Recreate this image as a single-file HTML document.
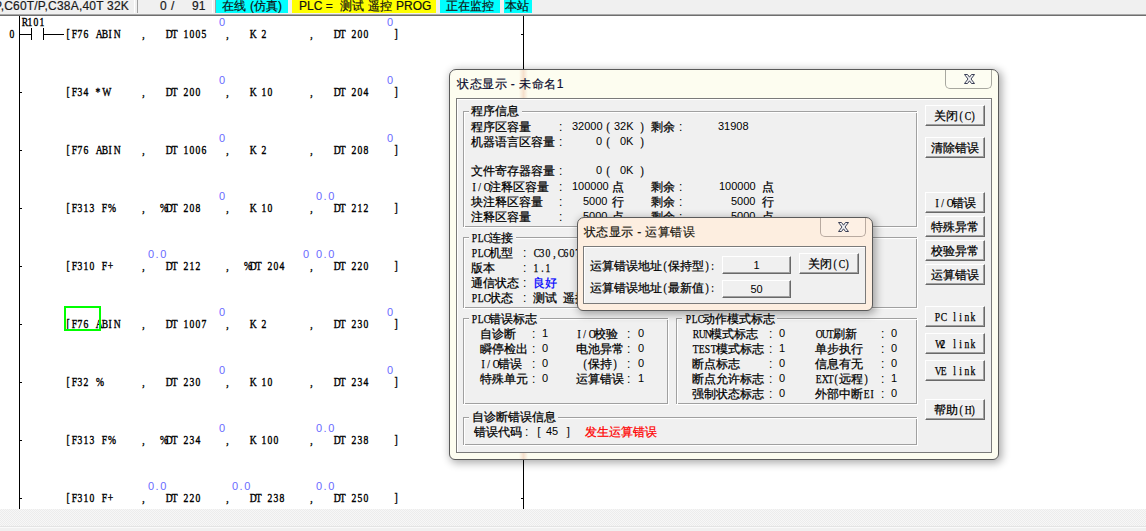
<!DOCTYPE html><html><head><meta charset='utf-8'><style>
*{margin:0;padding:0;box-sizing:border-box}
html,body{width:1146px;height:531px;overflow:hidden;background:#fff;position:relative}
div{position:absolute;white-space:pre}
.m{font-family:'Liberation Serif',serif;font-size:12px;line-height:12px;color:#000;-webkit-text-stroke:0.4px #000}
.q{display:inline-block;width:6px;text-align:center;font-family:'Liberation Serif',serif}
.q>span{display:inline-block;transform:scaleX(0.8)}
.b{font-family:'Liberation Sans',sans-serif;font-size:11px;line-height:12px;letter-spacing:1.5px;color:#6a6aff}
.s{font-family:'Liberation Sans',sans-serif;font-size:12px;line-height:12px;color:#000}
.c{font-family:'Liberation Sans',sans-serif;font-size:12px;line-height:12px;color:#000;-webkit-text-stroke:0.25px currentColor}
.t{font-family:'Liberation Sans',sans-serif;font-size:12px;line-height:12px;color:#101010;-webkit-text-stroke:0.2px currentColor}
.a{font-family:'Liberation Mono',monospace;letter-spacing:-1.2px}
.d{font-family:'Liberation Sans',sans-serif;font-size:11px;line-height:12px;color:#000}
</style></head><body><div style="position:absolute;left:0px;top:0px;width:1146px;height:14px;background:#f0f0f0"></div>
<div style="position:absolute;left:0px;top:14px;width:1146px;height:1px;background:#a8a8a8"></div>
<div style="position:absolute;left:0px;top:15px;width:1146px;height:1px;background:#6e6e6e"></div>
<div class="s" style="left:-6px;top:0px;width:134px;text-align:right;left:-6px;color:#1a1a1a;-webkit-text-stroke:0.2px #1a1a1a;letter-spacing:0.2px">P,C60T/P,C38A,40T 32K</div>
<div style="position:absolute;left:134px;top:0px;width:1px;height:13px;background:#fff"></div>
<div style="position:absolute;left:137px;top:0px;width:1px;height:13px;background:#a0a0a0"></div>
<div class="s" style="left:160px;top:0px;color:#1a1a1a;-webkit-text-stroke:0.2px #1a1a1a">0</div>
<div class="s" style="left:171px;top:0px;color:#1a1a1a;-webkit-text-stroke:0.2px #1a1a1a">/</div>
<div class="s" style="left:192px;top:0px;color:#1a1a1a;-webkit-text-stroke:0.2px #1a1a1a">91</div>
<div style="position:absolute;left:212px;top:0px;width:1px;height:13px;background:#fff"></div>
<div style="position:absolute;left:215px;top:0px;width:1px;height:13px;background:#a0a0a0"></div>
<div style="position:absolute;left:216px;top:0px;width:72px;height:13px;background:#00ffff"></div>
<div class="t" style="left:222px;top:0px;">在线</div>
<div class="t" style="left:250px;top:0px;">(仿真)</div>
<div style="position:absolute;left:292px;top:0px;width:144px;height:13px;background:#ffff00"></div>
<div class="t" style="left:299px;top:0px;">PLC =</div>
<div class="t" style="left:340px;top:0px;">测试</div>
<div class="t" style="left:368px;top:0px;">遥控</div>
<div class="t" style="left:396px;top:0px;">PROG</div>
<div style="position:absolute;left:440px;top:0px;width:60px;height:13px;background:#00ffff"></div>
<div class="t" style="left:446px;top:0px;">正在监控</div>
<div style="position:absolute;left:504px;top:0px;width:28px;height:13px;background:#00ffff"></div>
<div class="t" style="left:505px;top:0px;">本站</div>
<div style="position:absolute;left:0px;top:509px;width:1146px;height:17px;background-color:#f7f7f7;background-image:linear-gradient(45deg,#ececec 25%,transparent 25%,transparent 75%,#ececec 75%),linear-gradient(45deg,#ececec 25%,transparent 25%,transparent 75%,#ececec 75%);background-size:2px 2px;background-position:0 0,1px 1px"></div>
<div style="position:absolute;left:0px;top:526px;width:1146px;height:1px;background:#e4e4e4"></div>
<div style="position:absolute;left:0px;top:527px;width:1146px;height:1px;background:#fafafa"></div>
<div style="position:absolute;left:0px;top:528px;width:1146px;height:3px;background:#f0f0f0"></div>
<div style="position:absolute;left:19px;top:16px;width:1px;height:493px;background:#000"></div>
<div style="position:absolute;left:523px;top:16px;width:1px;height:493px;background:#000"></div>
<div style="position:absolute;left:20px;top:34px;width:2px;height:1px;background:#000"></div>
<div style="position:absolute;left:521px;top:34px;width:2px;height:1px;background:#000"></div>
<div style="position:absolute;left:20px;top:92px;width:2px;height:1px;background:#000"></div>
<div style="position:absolute;left:521px;top:92px;width:2px;height:1px;background:#000"></div>
<div style="position:absolute;left:20px;top:150px;width:2px;height:1px;background:#000"></div>
<div style="position:absolute;left:521px;top:150px;width:2px;height:1px;background:#000"></div>
<div style="position:absolute;left:20px;top:208px;width:2px;height:1px;background:#000"></div>
<div style="position:absolute;left:521px;top:208px;width:2px;height:1px;background:#000"></div>
<div style="position:absolute;left:20px;top:266px;width:2px;height:1px;background:#000"></div>
<div style="position:absolute;left:521px;top:266px;width:2px;height:1px;background:#000"></div>
<div style="position:absolute;left:20px;top:324px;width:2px;height:1px;background:#000"></div>
<div style="position:absolute;left:521px;top:324px;width:2px;height:1px;background:#000"></div>
<div style="position:absolute;left:20px;top:382px;width:2px;height:1px;background:#000"></div>
<div style="position:absolute;left:521px;top:382px;width:2px;height:1px;background:#000"></div>
<div style="position:absolute;left:20px;top:440px;width:2px;height:1px;background:#000"></div>
<div style="position:absolute;left:521px;top:440px;width:2px;height:1px;background:#000"></div>
<div style="position:absolute;left:20px;top:498px;width:2px;height:1px;background:#000"></div>
<div style="position:absolute;left:521px;top:498px;width:2px;height:1px;background:#000"></div>
<div class="m" style="left:9px;top:28px;"><span class="q"><span>0</span></span></div>
<div class="m" style="left:21px;top:16px;"><span class="q"><span>R</span></span><span class="q"><span>1</span></span><span class="q"><span>0</span></span><span class="q"><span>1</span></span></div>
<div style="position:absolute;left:20px;top:34px;width:11px;height:1px;background:#000"></div>
<div style="position:absolute;left:31px;top:28px;width:1px;height:12px;background:#000"></div>
<div style="position:absolute;left:43px;top:28px;width:1px;height:12px;background:#000"></div>
<div style="position:absolute;left:44px;top:34px;width:20px;height:1px;background:#000"></div>
<div class="m" style="left:65px;top:28px;"><span class="q"><span>[</span></span><span class="q"><span>F</span></span><span class="q"><span>7</span></span><span class="q"><span>6</span></span><span class="q"><span>&nbsp;</span></span><span class="q"><span>A</span></span><span class="q"><span>B</span></span><span class="q"><span>I</span></span><span class="q"><span>N</span></span></div>
<div class="m" style="left:140px;top:28px;"><span class="q"><span>,</span></span></div>
<div class="m" style="left:224px;top:28px;"><span class="q"><span>,</span></span></div>
<div class="m" style="left:308px;top:28px;"><span class="q"><span>,</span></span></div>
<div class="m" style="left:165px;top:28px;"><span class="q"><span>D</span></span><span class="q"><span>T</span></span><span class="q"><span>&nbsp;</span></span><span class="q"><span>1</span></span><span class="q"><span>0</span></span><span class="q"><span>0</span></span><span class="q"><span>5</span></span></div>
<div class="m" style="left:249px;top:28px;"><span class="q"><span>K</span></span><span class="q"><span>&nbsp;</span></span><span class="q"><span>2</span></span></div>
<div class="m" style="left:333px;top:28px;"><span class="q"><span>D</span></span><span class="q"><span>T</span></span><span class="q"><span>&nbsp;</span></span><span class="q"><span>2</span></span><span class="q"><span>0</span></span><span class="q"><span>0</span></span></div>
<div class="m" style="left:393px;top:28px;"><span class="q"><span>]</span></span></div>
<div class="b" style="left:219px;top:16px;">0</div>
<div class="b" style="left:387px;top:16px;">0</div>
<div class="m" style="left:65px;top:86px;"><span class="q"><span>[</span></span><span class="q"><span>F</span></span><span class="q"><span>3</span></span><span class="q"><span>4</span></span><span class="q"><span>&nbsp;</span></span><span class="q"><span>*</span></span><span class="q"><span>W</span></span></div>
<div class="m" style="left:140px;top:86px;"><span class="q"><span>,</span></span></div>
<div class="m" style="left:224px;top:86px;"><span class="q"><span>,</span></span></div>
<div class="m" style="left:308px;top:86px;"><span class="q"><span>,</span></span></div>
<div class="m" style="left:165px;top:86px;"><span class="q"><span>D</span></span><span class="q"><span>T</span></span><span class="q"><span>&nbsp;</span></span><span class="q"><span>2</span></span><span class="q"><span>0</span></span><span class="q"><span>0</span></span></div>
<div class="m" style="left:249px;top:86px;"><span class="q"><span>K</span></span><span class="q"><span>&nbsp;</span></span><span class="q"><span>1</span></span><span class="q"><span>0</span></span></div>
<div class="m" style="left:333px;top:86px;"><span class="q"><span>D</span></span><span class="q"><span>T</span></span><span class="q"><span>&nbsp;</span></span><span class="q"><span>2</span></span><span class="q"><span>0</span></span><span class="q"><span>4</span></span></div>
<div class="m" style="left:393px;top:86px;"><span class="q"><span>]</span></span></div>
<div class="b" style="left:219px;top:74px;">0</div>
<div class="b" style="left:387px;top:74px;">0</div>
<div class="m" style="left:65px;top:144px;"><span class="q"><span>[</span></span><span class="q"><span>F</span></span><span class="q"><span>7</span></span><span class="q"><span>6</span></span><span class="q"><span>&nbsp;</span></span><span class="q"><span>A</span></span><span class="q"><span>B</span></span><span class="q"><span>I</span></span><span class="q"><span>N</span></span></div>
<div class="m" style="left:140px;top:144px;"><span class="q"><span>,</span></span></div>
<div class="m" style="left:224px;top:144px;"><span class="q"><span>,</span></span></div>
<div class="m" style="left:308px;top:144px;"><span class="q"><span>,</span></span></div>
<div class="m" style="left:165px;top:144px;"><span class="q"><span>D</span></span><span class="q"><span>T</span></span><span class="q"><span>&nbsp;</span></span><span class="q"><span>1</span></span><span class="q"><span>0</span></span><span class="q"><span>0</span></span><span class="q"><span>6</span></span></div>
<div class="m" style="left:249px;top:144px;"><span class="q"><span>K</span></span><span class="q"><span>&nbsp;</span></span><span class="q"><span>2</span></span></div>
<div class="m" style="left:333px;top:144px;"><span class="q"><span>D</span></span><span class="q"><span>T</span></span><span class="q"><span>&nbsp;</span></span><span class="q"><span>2</span></span><span class="q"><span>0</span></span><span class="q"><span>8</span></span></div>
<div class="m" style="left:393px;top:144px;"><span class="q"><span>]</span></span></div>
<div class="b" style="left:219px;top:132px;">0</div>
<div class="b" style="left:387px;top:132px;">0</div>
<div class="m" style="left:65px;top:202px;"><span class="q"><span>[</span></span><span class="q"><span>F</span></span><span class="q"><span>3</span></span><span class="q"><span>1</span></span><span class="q"><span>3</span></span><span class="q"><span>&nbsp;</span></span><span class="q"><span>F</span></span><span class="q"><span>%</span></span></div>
<div class="m" style="left:140px;top:202px;"><span class="q"><span>,</span></span></div>
<div class="m" style="left:224px;top:202px;"><span class="q"><span>,</span></span></div>
<div class="m" style="left:308px;top:202px;"><span class="q"><span>,</span></span></div>
<div class="m" style="left:159px;top:202px;"><span class="q"><span>%</span></span><span class="q"><span>D</span></span><span class="q"><span>T</span></span><span class="q"><span>&nbsp;</span></span><span class="q"><span>2</span></span><span class="q"><span>0</span></span><span class="q"><span>8</span></span></div>
<div class="m" style="left:249px;top:202px;"><span class="q"><span>K</span></span><span class="q"><span>&nbsp;</span></span><span class="q"><span>1</span></span><span class="q"><span>0</span></span></div>
<div class="m" style="left:333px;top:202px;"><span class="q"><span>D</span></span><span class="q"><span>T</span></span><span class="q"><span>&nbsp;</span></span><span class="q"><span>2</span></span><span class="q"><span>1</span></span><span class="q"><span>2</span></span></div>
<div class="m" style="left:393px;top:202px;"><span class="q"><span>]</span></span></div>
<div class="b" style="left:219px;top:190px;">0</div>
<div class="b" style="left:316px;top:190px;">0.0</div>
<div class="m" style="left:65px;top:260px;"><span class="q"><span>[</span></span><span class="q"><span>F</span></span><span class="q"><span>3</span></span><span class="q"><span>1</span></span><span class="q"><span>0</span></span><span class="q"><span>&nbsp;</span></span><span class="q"><span>F</span></span><span class="q"><span>+</span></span></div>
<div class="m" style="left:140px;top:260px;"><span class="q"><span>,</span></span></div>
<div class="m" style="left:224px;top:260px;"><span class="q"><span>,</span></span></div>
<div class="m" style="left:308px;top:260px;"><span class="q"><span>,</span></span></div>
<div class="m" style="left:165px;top:260px;"><span class="q"><span>D</span></span><span class="q"><span>T</span></span><span class="q"><span>&nbsp;</span></span><span class="q"><span>2</span></span><span class="q"><span>1</span></span><span class="q"><span>2</span></span></div>
<div class="m" style="left:243px;top:260px;"><span class="q"><span>%</span></span><span class="q"><span>D</span></span><span class="q"><span>T</span></span><span class="q"><span>&nbsp;</span></span><span class="q"><span>2</span></span><span class="q"><span>0</span></span><span class="q"><span>4</span></span></div>
<div class="m" style="left:333px;top:260px;"><span class="q"><span>D</span></span><span class="q"><span>T</span></span><span class="q"><span>&nbsp;</span></span><span class="q"><span>2</span></span><span class="q"><span>2</span></span><span class="q"><span>0</span></span></div>
<div class="m" style="left:393px;top:260px;"><span class="q"><span>]</span></span></div>
<div class="b" style="left:148px;top:248px;">0.0</div>
<div class="b" style="left:303px;top:248px;">0</div>
<div class="b" style="left:316px;top:248px;">0.0</div>
<div class="m" style="left:65px;top:318px;"><span class="q"><span>[</span></span><span class="q"><span>F</span></span><span class="q"><span>7</span></span><span class="q"><span>6</span></span><span class="q"><span>&nbsp;</span></span><span class="q"><span>A</span></span><span class="q"><span>B</span></span><span class="q"><span>I</span></span><span class="q"><span>N</span></span></div>
<div class="m" style="left:140px;top:318px;"><span class="q"><span>,</span></span></div>
<div class="m" style="left:224px;top:318px;"><span class="q"><span>,</span></span></div>
<div class="m" style="left:308px;top:318px;"><span class="q"><span>,</span></span></div>
<div class="m" style="left:165px;top:318px;"><span class="q"><span>D</span></span><span class="q"><span>T</span></span><span class="q"><span>&nbsp;</span></span><span class="q"><span>1</span></span><span class="q"><span>0</span></span><span class="q"><span>0</span></span><span class="q"><span>7</span></span></div>
<div class="m" style="left:249px;top:318px;"><span class="q"><span>K</span></span><span class="q"><span>&nbsp;</span></span><span class="q"><span>2</span></span></div>
<div class="m" style="left:333px;top:318px;"><span class="q"><span>D</span></span><span class="q"><span>T</span></span><span class="q"><span>&nbsp;</span></span><span class="q"><span>2</span></span><span class="q"><span>3</span></span><span class="q"><span>0</span></span></div>
<div class="m" style="left:393px;top:318px;"><span class="q"><span>]</span></span></div>
<div class="b" style="left:219px;top:306px;">0</div>
<div class="b" style="left:387px;top:306px;">0</div>
<div class="m" style="left:65px;top:376px;"><span class="q"><span>[</span></span><span class="q"><span>F</span></span><span class="q"><span>3</span></span><span class="q"><span>2</span></span><span class="q"><span>&nbsp;</span></span><span class="q"><span>%</span></span></div>
<div class="m" style="left:140px;top:376px;"><span class="q"><span>,</span></span></div>
<div class="m" style="left:224px;top:376px;"><span class="q"><span>,</span></span></div>
<div class="m" style="left:308px;top:376px;"><span class="q"><span>,</span></span></div>
<div class="m" style="left:165px;top:376px;"><span class="q"><span>D</span></span><span class="q"><span>T</span></span><span class="q"><span>&nbsp;</span></span><span class="q"><span>2</span></span><span class="q"><span>3</span></span><span class="q"><span>0</span></span></div>
<div class="m" style="left:249px;top:376px;"><span class="q"><span>K</span></span><span class="q"><span>&nbsp;</span></span><span class="q"><span>1</span></span><span class="q"><span>0</span></span></div>
<div class="m" style="left:333px;top:376px;"><span class="q"><span>D</span></span><span class="q"><span>T</span></span><span class="q"><span>&nbsp;</span></span><span class="q"><span>2</span></span><span class="q"><span>3</span></span><span class="q"><span>4</span></span></div>
<div class="m" style="left:393px;top:376px;"><span class="q"><span>]</span></span></div>
<div class="b" style="left:219px;top:364px;">0</div>
<div class="b" style="left:387px;top:364px;">0</div>
<div class="m" style="left:65px;top:434px;"><span class="q"><span>[</span></span><span class="q"><span>F</span></span><span class="q"><span>3</span></span><span class="q"><span>1</span></span><span class="q"><span>3</span></span><span class="q"><span>&nbsp;</span></span><span class="q"><span>F</span></span><span class="q"><span>%</span></span></div>
<div class="m" style="left:140px;top:434px;"><span class="q"><span>,</span></span></div>
<div class="m" style="left:224px;top:434px;"><span class="q"><span>,</span></span></div>
<div class="m" style="left:308px;top:434px;"><span class="q"><span>,</span></span></div>
<div class="m" style="left:159px;top:434px;"><span class="q"><span>%</span></span><span class="q"><span>D</span></span><span class="q"><span>T</span></span><span class="q"><span>&nbsp;</span></span><span class="q"><span>2</span></span><span class="q"><span>3</span></span><span class="q"><span>4</span></span></div>
<div class="m" style="left:249px;top:434px;"><span class="q"><span>K</span></span><span class="q"><span>&nbsp;</span></span><span class="q"><span>1</span></span><span class="q"><span>0</span></span><span class="q"><span>0</span></span></div>
<div class="m" style="left:333px;top:434px;"><span class="q"><span>D</span></span><span class="q"><span>T</span></span><span class="q"><span>&nbsp;</span></span><span class="q"><span>2</span></span><span class="q"><span>3</span></span><span class="q"><span>8</span></span></div>
<div class="m" style="left:393px;top:434px;"><span class="q"><span>]</span></span></div>
<div class="b" style="left:219px;top:422px;">0</div>
<div class="b" style="left:316px;top:422px;">0.0</div>
<div class="m" style="left:65px;top:492px;"><span class="q"><span>[</span></span><span class="q"><span>F</span></span><span class="q"><span>3</span></span><span class="q"><span>1</span></span><span class="q"><span>0</span></span><span class="q"><span>&nbsp;</span></span><span class="q"><span>F</span></span><span class="q"><span>+</span></span></div>
<div class="m" style="left:140px;top:492px;"><span class="q"><span>,</span></span></div>
<div class="m" style="left:224px;top:492px;"><span class="q"><span>,</span></span></div>
<div class="m" style="left:308px;top:492px;"><span class="q"><span>,</span></span></div>
<div class="m" style="left:165px;top:492px;"><span class="q"><span>D</span></span><span class="q"><span>T</span></span><span class="q"><span>&nbsp;</span></span><span class="q"><span>2</span></span><span class="q"><span>2</span></span><span class="q"><span>0</span></span></div>
<div class="m" style="left:249px;top:492px;"><span class="q"><span>D</span></span><span class="q"><span>T</span></span><span class="q"><span>&nbsp;</span></span><span class="q"><span>2</span></span><span class="q"><span>3</span></span><span class="q"><span>8</span></span></div>
<div class="m" style="left:333px;top:492px;"><span class="q"><span>D</span></span><span class="q"><span>T</span></span><span class="q"><span>&nbsp;</span></span><span class="q"><span>2</span></span><span class="q"><span>5</span></span><span class="q"><span>0</span></span></div>
<div class="m" style="left:393px;top:492px;"><span class="q"><span>]</span></span></div>
<div class="b" style="left:148px;top:480px;">0.0</div>
<div class="b" style="left:232px;top:480px;">0.0</div>
<div class="b" style="left:316px;top:480px;">0.0</div>
<div style="position:absolute;left:64px;top:306px;width:37px;height:25px;border:2px solid #00ff00"></div>
<div style="position:absolute;left:449px;top:69px;width:550px;height:391px;background:#fdfdf0;border:1px solid #5a5a5a;border-radius:7px 7px 6px 6px;box-shadow:2px 2px 8px 1px rgba(0,0,0,0.33)"></div>
<div style="position:absolute;left:519px;top:70px;width:9px;height:28px;background:linear-gradient(to right,rgba(253,253,240,0),rgba(240,200,175,0.55),rgba(253,253,240,0))"></div>
<div style="position:absolute;left:519px;top:453px;width:9px;height:6px;background:linear-gradient(to right,rgba(253,253,240,0),rgba(240,200,175,0.55),rgba(253,253,240,0))"></div>
<div class="t" style="left:457px;top:78px;color:#101030;letter-spacing:0.5px">状态显示 - 未命名1</div>
<div style="position:absolute;left:945px;top:70px;width:47px;height:19px;border:1px solid #a8a8a0;border-top:none;border-radius:0 0 5px 5px;background:#fdfdf2"></div>
<svg style="position:absolute;left:964px;top:74px" width="12" height="11" viewBox="0 0 12 11"><polygon points="0.5,0.5 3.5,0.5 5.5,3.2 7.5,0.5 10.5,0.5 7,5 10.5,9.5 7.5,9.5 5.5,6.8 3.5,9.5 0.5,9.5 4,5" fill="#f4f4f6" stroke="#3a3f55" stroke-width="1" stroke-linejoin="round"/></svg>
<div style="position:absolute;left:456px;top:98px;width:536px;height:355px;background:#f0f0f0;border:1px solid #7a7a7a"></div>
<div style="position:absolute;left:457px;top:99px;width:534px;height:353px;border-left:1px solid #fff;border-top:1px solid #fff"></div>
<div style="position:absolute;left:463px;top:111px;width:454px;height:116px;border:1px solid #a0a0a0"></div>
<div style="position:absolute;left:464px;top:112px;width:453px;height:115px;border-left:1px solid #fff;border-top:1px solid #fff"></div>
<div style="position:absolute;left:917px;top:111px;width:1px;height:117px;background:#fff"></div>
<div style="position:absolute;left:463px;top:227px;width:455px;height:1px;background:#fff"></div>
<div style="position:absolute;left:469px;top:105px;width:53px;height:12px;background:#f0f0f0"></div>
<div class="c" style="left:471px;top:105px;">程序信息</div>
<div style="position:absolute;left:463px;top:237px;width:454px;height:71px;border:1px solid #a0a0a0"></div>
<div style="position:absolute;left:464px;top:238px;width:453px;height:70px;border-left:1px solid #fff;border-top:1px solid #fff"></div>
<div style="position:absolute;left:917px;top:237px;width:1px;height:72px;background:#fff"></div>
<div style="position:absolute;left:463px;top:308px;width:455px;height:1px;background:#fff"></div>
<div style="position:absolute;left:469px;top:231px;width:47px;height:12px;background:#f0f0f0"></div>
<div class="c" style="left:471px;top:232px;"><span class="q"><span>P</span></span><span class="q"><span>L</span></span><span class="q"><span>C</span></span>连接</div>
<div style="position:absolute;left:463px;top:318px;width:205px;height:86px;border:1px solid #a0a0a0"></div>
<div style="position:absolute;left:464px;top:319px;width:204px;height:85px;border-left:1px solid #fff;border-top:1px solid #fff"></div>
<div style="position:absolute;left:668px;top:318px;width:1px;height:87px;background:#fff"></div>
<div style="position:absolute;left:463px;top:404px;width:206px;height:1px;background:#fff"></div>
<div style="position:absolute;left:469px;top:312px;width:71px;height:12px;background:#f0f0f0"></div>
<div class="c" style="left:471px;top:313px;"><span class="q"><span>P</span></span><span class="q"><span>L</span></span><span class="q"><span>C</span></span>错误标志</div>
<div style="position:absolute;left:676px;top:318px;width:241px;height:86px;border:1px solid #a0a0a0"></div>
<div style="position:absolute;left:677px;top:319px;width:240px;height:85px;border-left:1px solid #fff;border-top:1px solid #fff"></div>
<div style="position:absolute;left:917px;top:318px;width:1px;height:87px;background:#fff"></div>
<div style="position:absolute;left:676px;top:404px;width:242px;height:1px;background:#fff"></div>
<div style="position:absolute;left:682px;top:312px;width:95px;height:12px;background:#f0f0f0"></div>
<div class="c" style="left:685px;top:313px;"><span class="q"><span>P</span></span><span class="q"><span>L</span></span><span class="q"><span>C</span></span>动作模式标志</div>
<div style="position:absolute;left:463px;top:417px;width:454px;height:28px;border:1px solid #a0a0a0"></div>
<div style="position:absolute;left:464px;top:418px;width:453px;height:27px;border-left:1px solid #fff;border-top:1px solid #fff"></div>
<div style="position:absolute;left:917px;top:417px;width:1px;height:29px;background:#fff"></div>
<div style="position:absolute;left:463px;top:445px;width:455px;height:1px;background:#fff"></div>
<div style="position:absolute;left:469px;top:411px;width:89px;height:12px;background:#f0f0f0"></div>
<div class="c" style="left:472px;top:411px;">自诊断错误信息</div>
<div class="c" style="left:471px;top:121px;">程序区容量</div>
<div class="c" style="left:471px;top:136px;">机器语言区容量</div>
<div class="c" style="left:471px;top:165px;">文件寄存器容量</div>
<div class="c" style="left:471px;top:181px;"><span class="q"><span>I</span></span><span class="q"><span>/</span></span><span class="q"><span>O</span></span>注释区容量</div>
<div class="c" style="left:471px;top:196px;">块注释区容量</div>
<div class="c" style="left:471px;top:211px;">注释区容量</div>
<div class="s" style="left:559px;top:121px;">:</div>
<div class="s" style="left:559px;top:136px;">:</div>
<div class="s" style="left:559px;top:165px;">:</div>
<div class="s" style="left:559px;top:181px;">:</div>
<div class="s" style="left:559px;top:196px;">:</div>
<div class="s" style="left:559px;top:211px;">:</div>
<div class="d" style="left:572px;top:120px;">32000</div>
<div class="c" style="left:605px;top:121px;"><span class="q"><span>(</span></span></div>
<div class="d" style="left:614px;top:120px;">32K</div>
<div class="c" style="left:639px;top:121px;"><span class="q"><span>)</span></span></div>
<div class="c" style="left:651px;top:121px;">剩余</div>
<div class="s" style="left:679px;top:121px;">:</div>
<div class="d" style="left:718px;top:120px;">31908</div>
<div class="d" style="left:596px;top:135px;">0</div>
<div class="c" style="left:605px;top:136px;"><span class="q"><span>(</span></span></div>
<div class="d" style="left:620px;top:135px;">0K</div>
<div class="c" style="left:639px;top:136px;"><span class="q"><span>)</span></span></div>
<div class="d" style="left:596px;top:164px;">0</div>
<div class="c" style="left:605px;top:165px;"><span class="q"><span>(</span></span></div>
<div class="d" style="left:620px;top:164px;">0K</div>
<div class="c" style="left:639px;top:165px;"><span class="q"><span>)</span></span></div>
<div class="d" style="left:572px;top:180px;">100000</div>
<div class="c" style="left:612px;top:181px;">点</div>
<div class="d" style="left:583px;top:195px;">5000</div>
<div class="c" style="left:612px;top:196px;">行</div>
<div class="d" style="left:583px;top:210px;">5000</div>
<div class="c" style="left:612px;top:211px;">点</div>
<div class="c" style="left:651px;top:181px;">剩余</div>
<div class="s" style="left:679px;top:181px;">:</div>
<div class="d" style="left:719px;top:180px;">100000</div>
<div class="c" style="left:762px;top:181px;">点</div>
<div class="c" style="left:651px;top:196px;">剩余</div>
<div class="s" style="left:679px;top:196px;">:</div>
<div class="d" style="left:731px;top:195px;">5000</div>
<div class="c" style="left:762px;top:196px;">行</div>
<div class="c" style="left:651px;top:211px;">剩余</div>
<div class="s" style="left:679px;top:211px;">:</div>
<div class="d" style="left:731px;top:210px;">5000</div>
<div class="c" style="left:762px;top:211px;">点</div>
<div class="c" style="left:471px;top:247px;"><span class="q"><span>P</span></span><span class="q"><span>L</span></span><span class="q"><span>C</span></span>机型</div>
<div class="s" style="left:523px;top:247px;">:</div>
<div class="c" style="left:533px;top:247px;color:#000"><span class="q"><span>C</span></span><span class="q"><span>3</span></span><span class="q"><span>0</span></span><span class="q"><span>,</span></span><span class="q"><span>C</span></span><span class="q"><span>6</span></span><span class="q"><span>0</span></span><span class="q"><span>T</span></span><span class="q"><span>/</span></span><span class="q"><span>P</span></span><span class="q"><span>,</span></span><span class="q"><span>C</span></span><span class="q"><span>3</span></span><span class="q"><span>8</span></span><span class="q"><span>A</span></span><span class="q"><span>,</span></span><span class="q"><span>4</span></span><span class="q"><span>0</span></span><span class="q"><span>T</span></span><span class="q"><span>&nbsp;</span></span><span class="q"><span>3</span></span><span class="q"><span>2</span></span><span class="q"><span>K</span></span></div>
<div class="c" style="left:471px;top:262px;">版本</div>
<div class="s" style="left:523px;top:262px;">:</div>
<div class="c" style="left:533px;top:262px;color:#000"><span class="q"><span>1</span></span><span class="q"><span>.</span></span><span class="q"><span>1</span></span></div>
<div class="c" style="left:471px;top:277px;">通信状态</div>
<div class="s" style="left:523px;top:277px;">:</div>
<div class="c" style="left:533px;top:277px;color:#0000ff">良好</div>
<div class="c" style="left:471px;top:292px;"><span class="q"><span>P</span></span><span class="q"><span>L</span></span><span class="q"><span>C</span></span>状态</div>
<div class="s" style="left:523px;top:292px;">:</div>
<div class="c" style="left:533px;top:292px;color:#000">测试<span class="q"><span>&nbsp;</span></span>遥控<span class="q"><span>&nbsp;</span></span><span class="q"><span>P</span></span><span class="q"><span>R</span></span><span class="q"><span>O</span></span><span class="q"><span>G</span></span></div>
<div class="c" style="left:480px;top:328px;">自诊断</div>
<div class="s" style="left:532px;top:328px;">:</div>
<div class="d" style="left:542px;top:327px;">1</div>
<div class="c" style="left:576px;top:328px;"><span class="q"><span>I</span></span><span class="q"><span>/</span></span><span class="q"><span>O</span></span>校验</div>
<div class="s" style="left:627px;top:328px;">:</div>
<div class="d" style="left:638px;top:327px;">0</div>
<div class="c" style="left:480px;top:343px;">瞬停检出</div>
<div class="s" style="left:532px;top:343px;">:</div>
<div class="d" style="left:542px;top:342px;">0</div>
<div class="c" style="left:576px;top:343px;">电池异常</div>
<div class="s" style="left:627px;top:343px;">:</div>
<div class="d" style="left:638px;top:342px;">0</div>
<div class="c" style="left:480px;top:358px;"><span class="q"><span>I</span></span><span class="q"><span>/</span></span><span class="q"><span>O</span></span>错误</div>
<div class="s" style="left:532px;top:358px;">:</div>
<div class="d" style="left:542px;top:357px;">0</div>
<div class="c" style="left:576px;top:358px;"><span class="q"><span>&nbsp;</span></span><span class="q"><span>(</span></span>保持<span class="q"><span>)</span></span></div>
<div class="s" style="left:627px;top:358px;">:</div>
<div class="d" style="left:638px;top:357px;">0</div>
<div class="c" style="left:480px;top:373px;">特殊单元</div>
<div class="s" style="left:532px;top:373px;">:</div>
<div class="d" style="left:542px;top:372px;">0</div>
<div class="c" style="left:576px;top:373px;">运算错误</div>
<div class="s" style="left:627px;top:373px;">:</div>
<div class="d" style="left:638px;top:372px;">1</div>
<div class="c" style="left:692px;top:328px;"><span class="q"><span>R</span></span><span class="q"><span>U</span></span><span class="q"><span>N</span></span>模式标志</div>
<div class="s" style="left:769px;top:328px;">:</div>
<div class="d" style="left:779px;top:327px;">0</div>
<div class="c" style="left:815px;top:328px;"><span class="q"><span>O</span></span><span class="q"><span>U</span></span><span class="q"><span>T</span></span>刷新</div>
<div class="s" style="left:881px;top:328px;">:</div>
<div class="d" style="left:891px;top:327px;">0</div>
<div class="c" style="left:692px;top:343px;"><span class="q"><span>T</span></span><span class="q"><span>E</span></span><span class="q"><span>S</span></span><span class="q"><span>T</span></span>模式标志</div>
<div class="s" style="left:769px;top:343px;">:</div>
<div class="d" style="left:779px;top:342px;">1</div>
<div class="c" style="left:815px;top:343px;">单步执行</div>
<div class="s" style="left:881px;top:343px;">:</div>
<div class="d" style="left:891px;top:342px;">0</div>
<div class="c" style="left:692px;top:358px;">断点标志</div>
<div class="s" style="left:769px;top:358px;">:</div>
<div class="d" style="left:779px;top:357px;">0</div>
<div class="c" style="left:815px;top:358px;">信息有无</div>
<div class="s" style="left:881px;top:358px;">:</div>
<div class="d" style="left:891px;top:357px;">0</div>
<div class="c" style="left:692px;top:373px;">断点允许标志</div>
<div class="s" style="left:769px;top:373px;">:</div>
<div class="d" style="left:779px;top:372px;">0</div>
<div class="c" style="left:815px;top:373px;"><span class="q"><span>E</span></span><span class="q"><span>X</span></span><span class="q"><span>T</span></span><span class="q"><span>(</span></span>远程<span class="q"><span>)</span></span></div>
<div class="s" style="left:881px;top:373px;">:</div>
<div class="d" style="left:891px;top:372px;">1</div>
<div class="c" style="left:692px;top:388px;">强制状态标志</div>
<div class="s" style="left:769px;top:388px;">:</div>
<div class="d" style="left:779px;top:387px;">0</div>
<div class="c" style="left:815px;top:388px;">外部中断<span class="q"><span>E</span></span><span class="q"><span>I</span></span></div>
<div class="s" style="left:881px;top:388px;">:</div>
<div class="d" style="left:891px;top:387px;">0</div>
<div class="c" style="left:474px;top:426px;">错误代码</div>
<div class="s" style="left:525px;top:426px;">:</div>
<div class="c" style="left:536px;top:426px;"><span class="q"><span>[</span></span></div>
<div class="d" style="left:546px;top:425px;">45</div>
<div class="c" style="left:565px;top:426px;"><span class="q"><span>]</span></span></div>
<div class="c" style="left:585px;top:426px;color:#ff0000">发生运算错误</div>
<div style="position:absolute;left:925px;top:105px;width:60px;height:21px;background:#f0f0f0;border-top:1px solid #fff;border-left:1px solid #fff;border-right:1px solid #696969;border-bottom:1px solid #696969"></div>
<div style="position:absolute;left:926px;top:106px;width:58px;height:19px;border-right:1px solid #a0a0a0;border-bottom:1px solid #a0a0a0"></div>
<div class="c" style="left:925px;top:110px;width:60px;text-align:center">关闭<span class="q"><span>(</span></span><span class="q"><span>C</span></span><span class="q"><span>)</span></span></div>
<div style="position:absolute;left:925px;top:137px;width:60px;height:21px;background:#f0f0f0;border-top:1px solid #fff;border-left:1px solid #fff;border-right:1px solid #696969;border-bottom:1px solid #696969"></div>
<div style="position:absolute;left:926px;top:138px;width:58px;height:19px;border-right:1px solid #a0a0a0;border-bottom:1px solid #a0a0a0"></div>
<div class="c" style="left:925px;top:142px;width:60px;text-align:center">清除错误</div>
<div style="position:absolute;left:925px;top:192px;width:60px;height:21px;background:#f0f0f0;border-top:1px solid #fff;border-left:1px solid #fff;border-right:1px solid #696969;border-bottom:1px solid #696969"></div>
<div style="position:absolute;left:926px;top:193px;width:58px;height:19px;border-right:1px solid #a0a0a0;border-bottom:1px solid #a0a0a0"></div>
<div class="c" style="left:925px;top:197px;width:60px;text-align:center"><span class="q"><span>I</span></span><span class="q"><span>/</span></span><span class="q"><span>O</span></span>错误</div>
<div style="position:absolute;left:925px;top:216px;width:60px;height:21px;background:#f0f0f0;border-top:1px solid #fff;border-left:1px solid #fff;border-right:1px solid #696969;border-bottom:1px solid #696969"></div>
<div style="position:absolute;left:926px;top:217px;width:58px;height:19px;border-right:1px solid #a0a0a0;border-bottom:1px solid #a0a0a0"></div>
<div class="c" style="left:925px;top:221px;width:60px;text-align:center">特殊异常</div>
<div style="position:absolute;left:925px;top:240px;width:60px;height:21px;background:#f0f0f0;border-top:1px solid #fff;border-left:1px solid #fff;border-right:1px solid #696969;border-bottom:1px solid #696969"></div>
<div style="position:absolute;left:926px;top:241px;width:58px;height:19px;border-right:1px solid #a0a0a0;border-bottom:1px solid #a0a0a0"></div>
<div class="c" style="left:925px;top:245px;width:60px;text-align:center">校验异常</div>
<div style="position:absolute;left:925px;top:264px;width:60px;height:21px;background:#f0f0f0;border-top:1px solid #fff;border-left:1px solid #fff;border-right:1px solid #696969;border-bottom:1px solid #696969"></div>
<div style="position:absolute;left:926px;top:265px;width:58px;height:19px;border-right:1px solid #a0a0a0;border-bottom:1px solid #a0a0a0"></div>
<div class="c" style="left:925px;top:269px;width:60px;text-align:center">运算错误</div>
<div style="position:absolute;left:925px;top:306px;width:60px;height:21px;background:#f0f0f0;border-top:1px solid #fff;border-left:1px solid #fff;border-right:1px solid #696969;border-bottom:1px solid #696969"></div>
<div style="position:absolute;left:926px;top:307px;width:58px;height:19px;border-right:1px solid #a0a0a0;border-bottom:1px solid #a0a0a0"></div>
<div class="c" style="left:925px;top:311px;width:60px;text-align:center"><span class="q"><span>P</span></span><span class="q"><span>C</span></span><span class="q"><span>&nbsp;</span></span><span class="q"><span>l</span></span><span class="q"><span>i</span></span><span class="q"><span>n</span></span><span class="q"><span>k</span></span></div>
<div style="position:absolute;left:925px;top:333px;width:60px;height:21px;background:#f0f0f0;border-top:1px solid #fff;border-left:1px solid #fff;border-right:1px solid #696969;border-bottom:1px solid #696969"></div>
<div style="position:absolute;left:926px;top:334px;width:58px;height:19px;border-right:1px solid #a0a0a0;border-bottom:1px solid #a0a0a0"></div>
<div class="c" style="left:925px;top:338px;width:60px;text-align:center"><span class="q"><span>W</span></span><span class="q"><span>2</span></span><span class="q"><span>&nbsp;</span></span><span class="q"><span>l</span></span><span class="q"><span>i</span></span><span class="q"><span>n</span></span><span class="q"><span>k</span></span></div>
<div style="position:absolute;left:925px;top:360px;width:60px;height:21px;background:#f0f0f0;border-top:1px solid #fff;border-left:1px solid #fff;border-right:1px solid #696969;border-bottom:1px solid #696969"></div>
<div style="position:absolute;left:926px;top:361px;width:58px;height:19px;border-right:1px solid #a0a0a0;border-bottom:1px solid #a0a0a0"></div>
<div class="c" style="left:925px;top:365px;width:60px;text-align:center"><span class="q"><span>V</span></span><span class="q"><span>E</span></span><span class="q"><span>&nbsp;</span></span><span class="q"><span>l</span></span><span class="q"><span>i</span></span><span class="q"><span>n</span></span><span class="q"><span>k</span></span></div>
<div style="position:absolute;left:925px;top:399px;width:60px;height:21px;background:#f0f0f0;border-top:1px solid #fff;border-left:1px solid #fff;border-right:1px solid #696969;border-bottom:1px solid #696969"></div>
<div style="position:absolute;left:926px;top:400px;width:58px;height:19px;border-right:1px solid #a0a0a0;border-bottom:1px solid #a0a0a0"></div>
<div class="c" style="left:925px;top:404px;width:60px;text-align:center">帮助<span class="q"><span>(</span></span><span class="q"><span>H</span></span><span class="q"><span>)</span></span></div>
<div style="position:absolute;left:577px;top:217px;width:296px;height:94px;background:#fdeee0;border:1px solid #5a5a5a;border-radius:7px 7px 6px 6px;box-shadow:2px 2px 8px 1px rgba(0,0,0,0.33)"></div>
<div class="t" style="left:584px;top:226px;color:#201810;letter-spacing:0.4px">状态显示 - 运算错误</div>
<div style="position:absolute;left:820px;top:218px;width:46px;height:19px;border:1px solid #b8aaa0;border-top:none;border-radius:0 0 5px 5px;background:#fdf0e4"></div>
<svg style="position:absolute;left:838px;top:222px" width="12" height="11" viewBox="0 0 12 11"><polygon points="0.5,0.5 3.5,0.5 5.5,3.2 7.5,0.5 10.5,0.5 7,5 10.5,9.5 7.5,9.5 5.5,6.8 3.5,9.5 0.5,9.5 4,5" fill="#f4f4f6" stroke="#3a3f55" stroke-width="1" stroke-linejoin="round"/></svg>
<div style="position:absolute;left:583px;top:246px;width:283px;height:58px;background:#f0f0f0;border:1px solid #7a7a7a"></div>
<div style="position:absolute;left:584px;top:247px;width:281px;height:56px;border-left:1px solid #fff;border-top:1px solid #fff"></div>
<div class="c" style="left:590px;top:260px;">运算错误地址<span class="q"><span>(</span></span>保持型<span class="q"><span>)</span></span><span class="q"><span>:</span></span></div>
<div class="c" style="left:590px;top:282px;">运算错误地址<span class="q"><span>(</span></span>最新值<span class="q"><span>)</span></span><span class="q"><span>:</span></span></div>
<div style="position:absolute;left:722px;top:256px;width:69px;height:18px;background:#f0f0f0;border-top:1px solid #fff;border-left:1px solid #fff;border-right:1px solid #696969;border-bottom:1px solid #696969"></div>
<div style="position:absolute;left:723px;top:257px;width:67px;height:16px;border-right:1px solid #a0a0a0;border-bottom:1px solid #a0a0a0"></div>
<div class="d" style="left:722px;top:259px;width:69px;text-align:center">1</div>
<div style="position:absolute;left:722px;top:280px;width:69px;height:18px;background:#f0f0f0;border-top:1px solid #fff;border-left:1px solid #fff;border-right:1px solid #696969;border-bottom:1px solid #696969"></div>
<div style="position:absolute;left:723px;top:281px;width:67px;height:16px;border-right:1px solid #a0a0a0;border-bottom:1px solid #a0a0a0"></div>
<div class="d" style="left:722px;top:283px;width:69px;text-align:center">50</div>
<div style="position:absolute;left:799px;top:253px;width:60px;height:21px;background:#f0f0f0;border-top:1px solid #fff;border-left:1px solid #fff;border-right:1px solid #696969;border-bottom:1px solid #696969"></div>
<div style="position:absolute;left:800px;top:254px;width:58px;height:19px;border-right:1px solid #a0a0a0;border-bottom:1px solid #a0a0a0"></div>
<div class="c" style="left:799px;top:258px;width:60px;text-align:center">关闭<span class="q"><span>(</span></span><span class="q"><span>C</span></span><span class="q"><span>)</span></span></div></body></html>
